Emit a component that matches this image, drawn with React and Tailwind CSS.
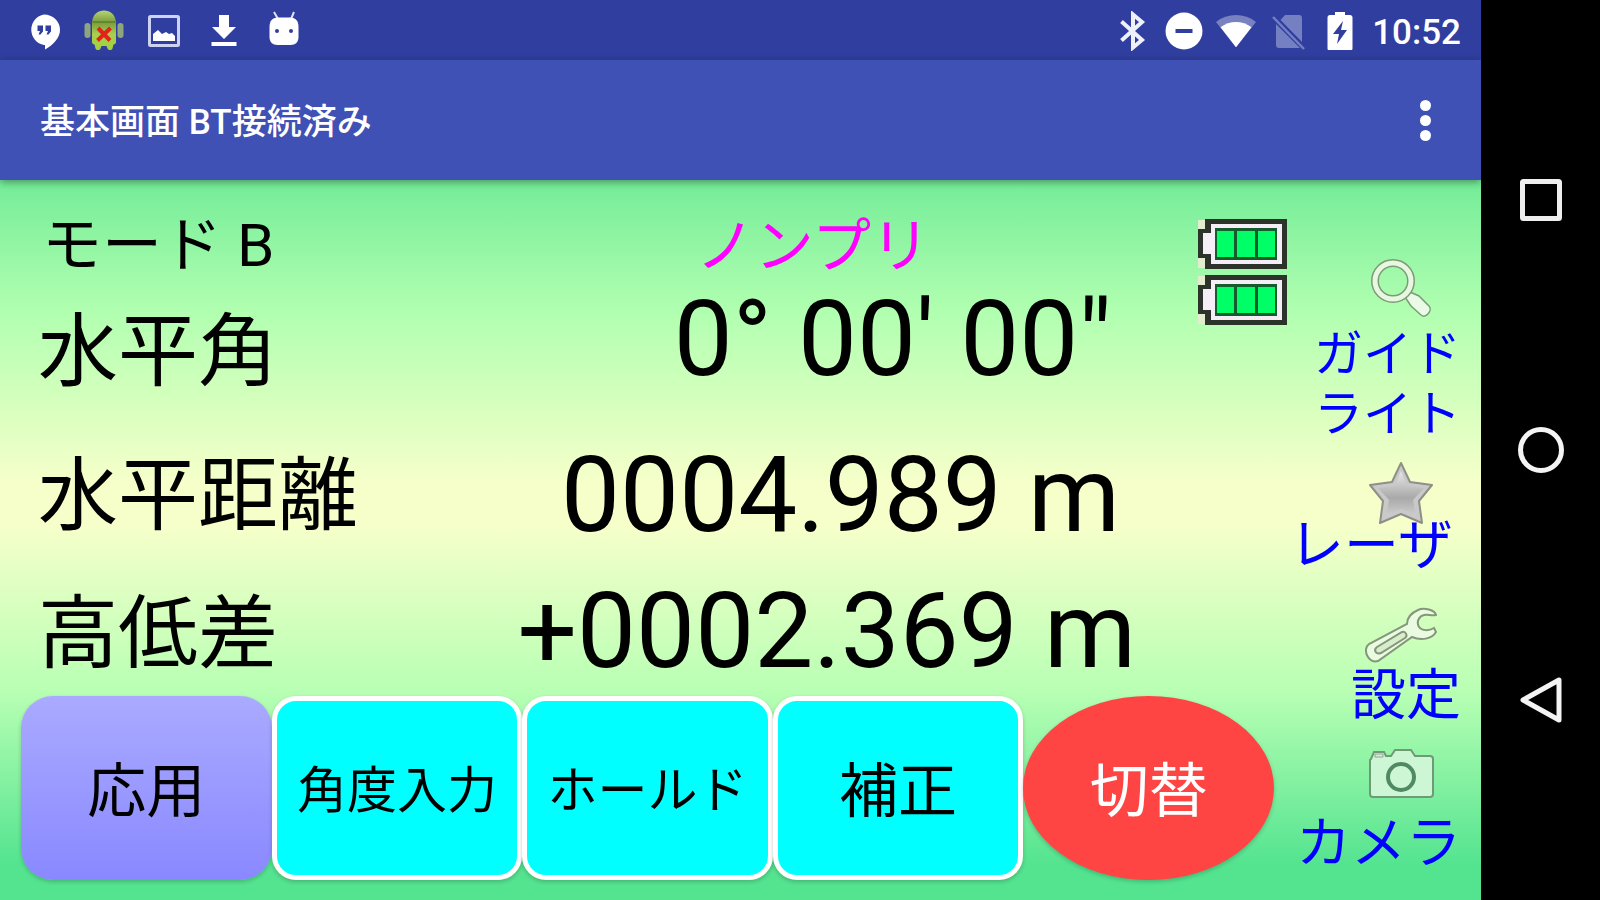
// src/App.jsx
import React from 'react';

const HangoutsIcon = () => (
  <svg viewBox="0 0 40 40" className="w-10 h-10">
    <path d="M20 3.500a16 15.500 0 0 1 16 15.500c0 8-7 15-15 19.500v-4.500h-1a15.500 15.500 0 0 1 0-30.500z" fill="#fff" />
    <path d="M13.500 14.500h5.500v6l-2.500 3h-2l1.500-3.500h-2.500zM21.500 14.500h5.500v6l-2.500 3h-2l1.500-3.500h-2.500z" fill="#303f9f" />
  </svg>
);

const BugdroidIcon = () => (
  <svg viewBox="0 0 40 44" className="w-10 h-11">
    <defs>
      <linearGradient id="droid" x1="0" y1="0" x2="0" y2="1">
        <stop offset="0" stopColor="#b5d672" />
        <stop offset="0.3" stopColor="#7a9c3c" />
        <stop offset="0.6" stopColor="#a9cf4e" />
        <stop offset="1" stopColor="#a4cf3c" />
      </linearGradient>
    </defs>
    <rect x="0.5" y="14" width="6" height="15" rx="3" fill="#8fa67c" />
    <rect x="33.500" y="14" width="6" height="15" rx="3" fill="#8fa67c" />
    <path d="M8 13C9 5 14 1.500 20 1.500S31 5 32 13v20c0 1.500-1 2.500-2.500 2.500l-1 4c-1 2-4 2-5 0l-1-2.500h-5l-1 2.500c-1 2-4 2-5 0l-1-4C9 35.500 8 34.500 8 33z" fill="url(#droid)" />
    <path d="M8.500 13h23" stroke="#5f7f2c" strokeWidth="1.500" />
    <path d="M14 19l12 12.500M26.500 19L13.500 31.500" stroke="#e3221b" strokeWidth="4" />
  </svg>
);

const PictureIcon = () => (
  <svg viewBox="0 0 40 40" className="w-10 h-10">
    <rect x="5.500" y="5.500" width="29" height="29" rx="1" fill="none" stroke="#cdd2f0" strokeWidth="3" />
    <path d="M9 30v-7l5-4 4 4 4-2 3 2 3-1 3 3v5z" fill="#fff" />
  </svg>
);

const DownloadIcon = () => (
  <svg viewBox="0 0 40 40" className="w-10 h-10">
    <path d="M15 4h10v12h7L20 28 8 16h7zM7.500 31h25v4h-25z" fill="#fff" />
  </svg>
);

const DroidHeadIcon = () => (
  <svg viewBox="0 0 40 40" className="w-10 h-10">
    <path d="M10 1l4 7M30 1l-3 7" stroke="#dfe2f5" strokeWidth="2" />
    <path d="M5.500 16c0-6 3-9.500 8-9.500h13c5 0 8 3.500 8 9.500v10c0 5-3 8-8 8h-13c-5 0-8-3-8-8z" fill="#fff" />
    <circle cx="13" cy="20" r="2" fill="#303f9f" />
    <circle cx="27" cy="20" r="2" fill="#303f9f" />
  </svg>
);

const BluetoothIcon = () => (
  <svg viewBox="0 0 40 40" className="w-10 h-10">
    <path d="M9.500 10.500L30 29l-9 7.500V3.500L30 11 9.500 29.500" fill="none" stroke="#eef0fa" strokeWidth="4" />
  </svg>
);

const DoNotDisturbIcon = () => (
  <svg viewBox="0 0 40 40" className="w-10 h-10">
    <circle cx="20" cy="20" r="18.500" fill="#fff" />
    <path d="M11.500 20h17" stroke="#303f9f" strokeWidth="4" />
  </svg>
);

const WifiIcon = () => (
  <svg viewBox="0 0 44 40" className="w-10 h-10">
    <path d="M22 38L0 10C13 0 31 0 44 10z" fill="#fff" opacity="0.35" />
    <path d="M22 38L5 16c10-8 24-8 34 0z" fill="#fff" />
  </svg>
);

const NoSimIcon = () => (
  <svg viewBox="0 0 40 40" className="w-10 h-10">
    <path d="M17 4h14c2 0 3 1 3 3v24L12.500 9zM8 13l24 24H11c-2 0-3-1-3-3z" fill="#7480c2" />
    <path d="M5 6l31 32" stroke="#7480c2" strokeWidth="2.500" />
  </svg>
);

const ChargingIcon = () => (
  <svg viewBox="0 0 40 40" className="w-10 h-10">
    <path d="M15 1h10v3h5c1.500 0 2.500 1 2.500 2.500v31c0 1-.5 1.500-1.500 1.500H9c-1 0-1.500-.5-1.500-1.500v-31C7.500 5 8.500 4 10 4h5z" fill="#fff" />
    <path d="M23 10L13 23h6l-2 10 10-14h-6z" fill="#303f9f" />
  </svg>
);

const BatteryGauge = () => (
  <svg viewBox="0 0 90 50" className="w-[90px] h-[50px]">
    <path d="M1 1h9v10H1zM1 39h9v10H1z" fill="#e4ecd0" />
    <path d="M8 0h82v50H8V39H1V10h7z" fill="#2b332b" />
    <path d="M14 5h71v40H14V35H6V14h8z" fill="#f6eef6" />
    <path d="M18 9h62v32H18z" fill="#145c2c" />
    <path d="M20 12h17v26H20zM40 12h18v26H40zM61 12h17v26H61z" fill="#00ff66" />
  </svg>
);

const MagnifierIcon = () => (
  <svg viewBox="0 0 72 72" className="w-[72px] h-[72px]">
    <path d="M40 44l5-5 9 4 10 10c4 4-3 13-8 9L46 53z" fill="#e9fbe6" stroke="#7f9a78" strokeWidth="1.500" />
    <circle cx="28" cy="28" r="18" fill="none" stroke="#7f9a78" strokeWidth="8" />
    <circle cx="28" cy="28" r="18" fill="none" stroke="#e6f8e0" strokeWidth="5" />
  </svg>
);

const StarIcon = () => (
  <svg viewBox="0 0 72 72" className="w-[72px] h-[72px]">
    <defs>
      <linearGradient id="star" x1="0" y1="0" x2="0" y2="1">
        <stop offset="0" stopColor="#e8e8e8" />
        <stop offset="0.6" stopColor="#a9a9a9" />
        <stop offset="1" stopColor="#cfcfcf" />
      </linearGradient>
    </defs>
    <path d="M36 6l9 19 22 3-13 16 3 22-21-9-21 9 3-22L5 28l22-3z" fill="#c9c9c9" stroke="#8f8f88" strokeWidth="2" strokeLinejoin="round" />
    <path d="M36 14l6 15 17 2-11 12 3 16-15-7-15 7 3-16-11-12 17-2z" fill="url(#star)" />
  </svg>
);

const WrenchIcon = () => (
  <svg viewBox="0 0 72 60" className="w-[72px] h-[60px]">
    <path d="M71 10c-1-5-12-8-18-5-7 3-11 8-11 14L4 39c-7 5-1 20 9 17l34-24c9 4 20 2 24-5l-2-4c-5 3-12 3-15-1-3-5 0-11 5-12 4-1 7 1 12 0z" fill="#e9fbe0" stroke="#86967a" strokeWidth="2" />
    <path d="M12 42l25-15c4-1 6 4 3 6L16 48c-5 2-8-3-4-6z" fill="#d6efca" stroke="#86967a" strokeWidth="2" />
  </svg>
);

const CameraIcon = () => (
  <svg viewBox="0 0 72 60" className="w-[72px] h-[60px]">
    <path d="M6 14l3-7h10l2 4h5l4-6h16l4 6h15c2 0 3 1 3 3v35c0 2-1 3-3 3H8c-2 0-3-1-3-3V15z" fill="#cdf7d4" stroke="#6f9a78" strokeWidth="2" />
    <path d="M10 9h8v3h-8z" fill="#dfe8d8" stroke="#8fa890" strokeWidth="1" />
    <circle cx="36" cy="32" r="13" fill="#cdf7d4" stroke="#4f8a63" strokeWidth="4" />
  </svg>
);

const readings = [
  { label: '水平角', value: '0° 00\' 00"', labelClass: 'pt-6', valueClass: 'pr-6', rowClass: '' },
  { label: '水平距離', value: '0004.989 m', labelClass: '', valueClass: 'pr-4', rowClass: 'mt-[52px]' },
  { label: '高低差', value: '+0002.369 m', labelClass: 'pt-1', valueClass: '', rowClass: 'mt-8' },
];

const cyan = 'rounded-3xl border-[5px] border-white bg-[#00ffff] text-black';

const actions = [
  { label: '応用', className: 'rounded-[32px] bg-linear-to-b from-[#aaaaff] to-[#8a88ff] text-black text-[59px]' },
  { label: '角度入力', className: `${cyan} text-[50px]` },
  { label: 'ホールド', className: `${cyan} text-[50px]` },
  { label: '補正', className: `${cyan} text-[59px]` },
  { label: '切替', className: 'rounded-[50%] bg-[#ff4444] text-white text-[59px]' },
];

const tools = [
  { lines: ['ガイド', 'ライト'], Icon: MagnifierIcon, className: '', textClass: 'text-[49px]' },
  { lines: ['レーザ'], Icon: StarIcon, className: 'mt-3', textClass: 'text-[55px] -mt-[14px] pr-2' },
  { lines: ['設定'], Icon: WrenchIcon, className: 'mt-[30px]', textClass: 'text-[55px]' },
  { lines: ['カメラ'], Icon: CameraIcon, className: 'mt-5', textClass: 'text-[55px] mt-2' },
];

const StatusBar = () => (
  <div className="flex h-[60px] items-center justify-between bg-[#303f9f] pt-0.5 pr-5 pl-6">
    <div className="flex items-center gap-5">
      <HangoutsIcon />
      <BugdroidIcon />
      <PictureIcon />
      <DownloadIcon />
      <DroidHeadIcon />
    </div>
    <div className="flex items-center gap-3">
      <BluetoothIcon />
      <DoNotDisturbIcon />
      <WifiIcon />
      <NoSimIcon />
      <ChargingIcon />
      <span className="pt-0.5 text-[35px] leading-none font-medium text-white">10:52</span>
    </div>
  </div>
);

const AppBar = () => (
  <header className="relative z-10 flex h-[120px] items-center justify-between bg-[#3f51b5] pr-9 pl-10 shadow-[0_2px_8px_rgba(0,0,0,0.4)]">
    <h1 className="pt-1 text-[35px] leading-none font-medium text-white">基本画面 BT接続済み</h1>
    <button type="button" aria-label="メニュー" className="flex w-10 flex-col items-center gap-1">
      <span className="h-[11px] w-[11px] rounded-full bg-white" />
      <span className="h-[11px] w-[11px] rounded-full bg-white" />
      <span className="h-[11px] w-[11px] rounded-full bg-white" />
    </button>
  </header>
);

const NavBar = () => (
  <nav className="flex w-[119px] shrink-0 flex-col bg-black py-[75px]">
    <button type="button" aria-label="履歴" className="flex flex-1 items-center justify-center">
      <svg viewBox="0 0 48 48" className="h-12 w-12">
        <rect x="5.500" y="5.500" width="37" height="37" rx="1" fill="none" stroke="#eee" strokeWidth="5" />
      </svg>
    </button>
    <button type="button" aria-label="ホーム" className="flex flex-1 items-center justify-center">
      <svg viewBox="0 0 48 48" className="h-12 w-12">
        <circle cx="24" cy="24" r="20.500" fill="none" stroke="#f4f4f4" strokeWidth="5" />
      </svg>
    </button>
    <button type="button" aria-label="戻る" className="flex flex-1 items-center justify-center">
      <svg viewBox="0 0 48 48" className="h-12 w-12">
        <path d="M42 4v40L6 24z" fill="none" stroke="#f4f4f4" strokeWidth="5" strokeLinejoin="round" />
      </svg>
    </button>
  </nav>
);

const App = () => {
  return (
    <div className="flex min-h-screen bg-black font-['Roboto','Noto_Sans_CJK_JP',sans-serif]">
      <div className="flex min-w-0 flex-1 flex-col">
        <StatusBar />
        <AppBar />
        <main className="flex flex-1 bg-[linear-gradient(to_bottom,#74ec98_0%,#b0ffb0_18%,#f6ffca_42%,#f6ffca_48%,#b8ffb4_71%,#54e490_95%,#54e490_100%)] pl-5">
          <div className="flex flex-1 flex-col pb-5">
            <div className="flex flex-1">
              <section className="flex-1 pt-6 pl-[18px] text-black">
                <div className="flex h-[84px] items-center justify-between pr-[206px] pl-1 leading-none">
                  <span className="text-[60px]">モード B</span>
                  <span className="text-[59px] text-[#ff00ff]">ノンプリ</span>
                </div>
                {readings.map(({ label, value, labelClass, valueClass, rowClass }) => (
                  <div key={label} className={`flex items-center justify-between whitespace-nowrap ${rowClass}`}>
                    <span className={`text-[80px] leading-none ${labelClass}`}>{label}</span>
                    <span className={`text-[105px] leading-[104px] ${valueClass}`}>{value}</span>
                  </div>
                ))}
              </section>
              <div className="-mr-3 flex w-[151px] flex-col items-end gap-[6px] pt-[39px]">
                <BatteryGauge />
                <BatteryGauge />
              </div>
            </div>
            <div className="mx-px grid h-[184px] grid-cols-5">
              {actions.map(({ label, className }) => (
                <button
                  key={label}
                  type="button"
                  className={`pt-1.5 leading-none whitespace-nowrap shadow-[0_2px_4px_rgba(0,0,0,0.2)] ${className}`}
                >
                  {label}
                </button>
              ))}
            </div>
          </div>
          <aside className="flex w-[206px] shrink-0 flex-col items-end pt-[73px] pr-5">
            {tools.map(({ lines, Icon, className, textClass }) => (
              <button key={lines[0]} type="button" className={`flex flex-col items-end text-[#0000ff] ${className}`}>
                <span className="relative z-10 mr-6">
                  <Icon />
                </span>
                <span className={`leading-[60px] whitespace-nowrap ${textClass}`}>
                  {lines.map((line) => (
                    <span key={line} className="block">{line}</span>
                  ))}
                </span>
              </button>
            ))}
          </aside>
        </main>
      </div>
      <NavBar />
    </div>
  );
};

export default App;
